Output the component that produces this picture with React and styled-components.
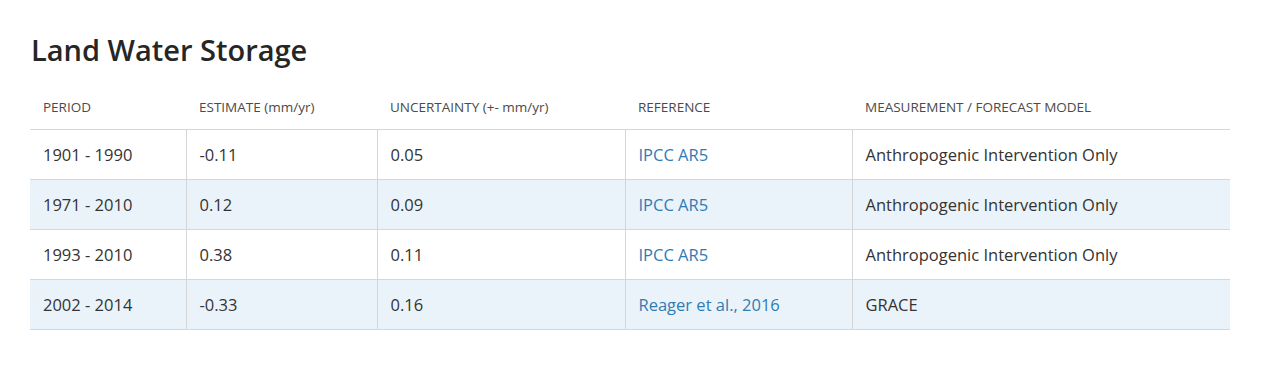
import styled, { createGlobalStyle } from "styled-components";

const rows = [
  { period: "1901 - 1990", estimate: "-0.11", uncertainty: "0.05", reference: "IPCC AR5", model: "Anthropogenic Intervention Only" },
  { period: "1971 - 2010", estimate: "0.12", uncertainty: "0.09", reference: "IPCC AR5", model: "Anthropogenic Intervention Only" },
  { period: "1993 - 2010", estimate: "0.38", uncertainty: "0.11", reference: "IPCC AR5", model: "Anthropogenic Intervention Only" },
  { period: "2002 - 2014", estimate: "-0.33", uncertainty: "0.16", reference: "Reager et al., 2016", model: "GRACE" },
];

function App() {
  return (
    <>
      <GlobalStyle />
      <Section>
        <Title>Land Water Storage</Title>
        <Table>
          <colgroup>
            <col style={{ width: 156 }} />
            <col style={{ width: 191 }} />
            <col style={{ width: 248 }} />
            <col style={{ width: 227 }} />
            <col />
          </colgroup>
          <thead>
            <tr>
              <Th>Period</Th>
              <Th>
                Estimate <Unit>(mm/yr)</Unit>
              </Th>
              <Th>
                Uncertainty <Unit>(+- mm/yr)</Unit>
              </Th>
              <Th>Reference</Th>
              <Th>Measurement / Forecast Model</Th>
            </tr>
          </thead>
          <tbody>
            {rows.map((r, i) => (
              <Row key={i} $striped={i % 2 === 1}>
                <Td $first>{r.period}</Td>
                <Td>{r.estimate}</Td>
                <Td>{r.uncertainty}</Td>
                <Td>
                  <RefLink href="#">{r.reference}</RefLink>
                </Td>
                <Td>{r.model}</Td>
              </Row>
            ))}
          </tbody>
        </Table>
      </Section>
    </>
  );
}

const GlobalStyle = createGlobalStyle`
  body {
    margin: 0;
    background: #ffffff;
    font-family: "Open Sans", "Noto Sans", sans-serif;
    color: #333;
  }
`;

const Section = styled.div`
  padding: 30px 38px 0 30px;
`;

const Title = styled.h2`
  margin: 0 0 12px 1px;
  font-size: 29px;
  font-weight: 600;
  line-height: 40px;
  color: #262626;
`;

const Table = styled.table`
  width: 1200px;
  border-collapse: collapse;
  table-layout: fixed;
`;

const Th = styled.th`
  text-align: left;
  font-weight: 400;
  font-size: 13.5px;
  text-transform: uppercase;
  color: #4a4a4a;
  height: 44px;
  padding: 3px 13px 0;
  border-bottom: 1px solid #d6d6d6;
  white-space: nowrap;
`;

const Unit = styled.span`
  text-transform: none;
`;

const Row = styled.tr`
  background: ${(p) => (p.$striped ? "#ebf3fa" : "#ffffff")};
`;

const Td = styled.td`
  height: 49px;
  padding: 0 13px;
  font-size: 16.5px;
  color: #333;
  border-bottom: 1px solid #d6d6d6;
  border-left: ${(p) => (p.$first ? "none" : "1px solid #d6d6d6")};
`;

const RefLink = styled.a`
  color: #2f7cb5;
  text-decoration: none;
`;

export default App;
